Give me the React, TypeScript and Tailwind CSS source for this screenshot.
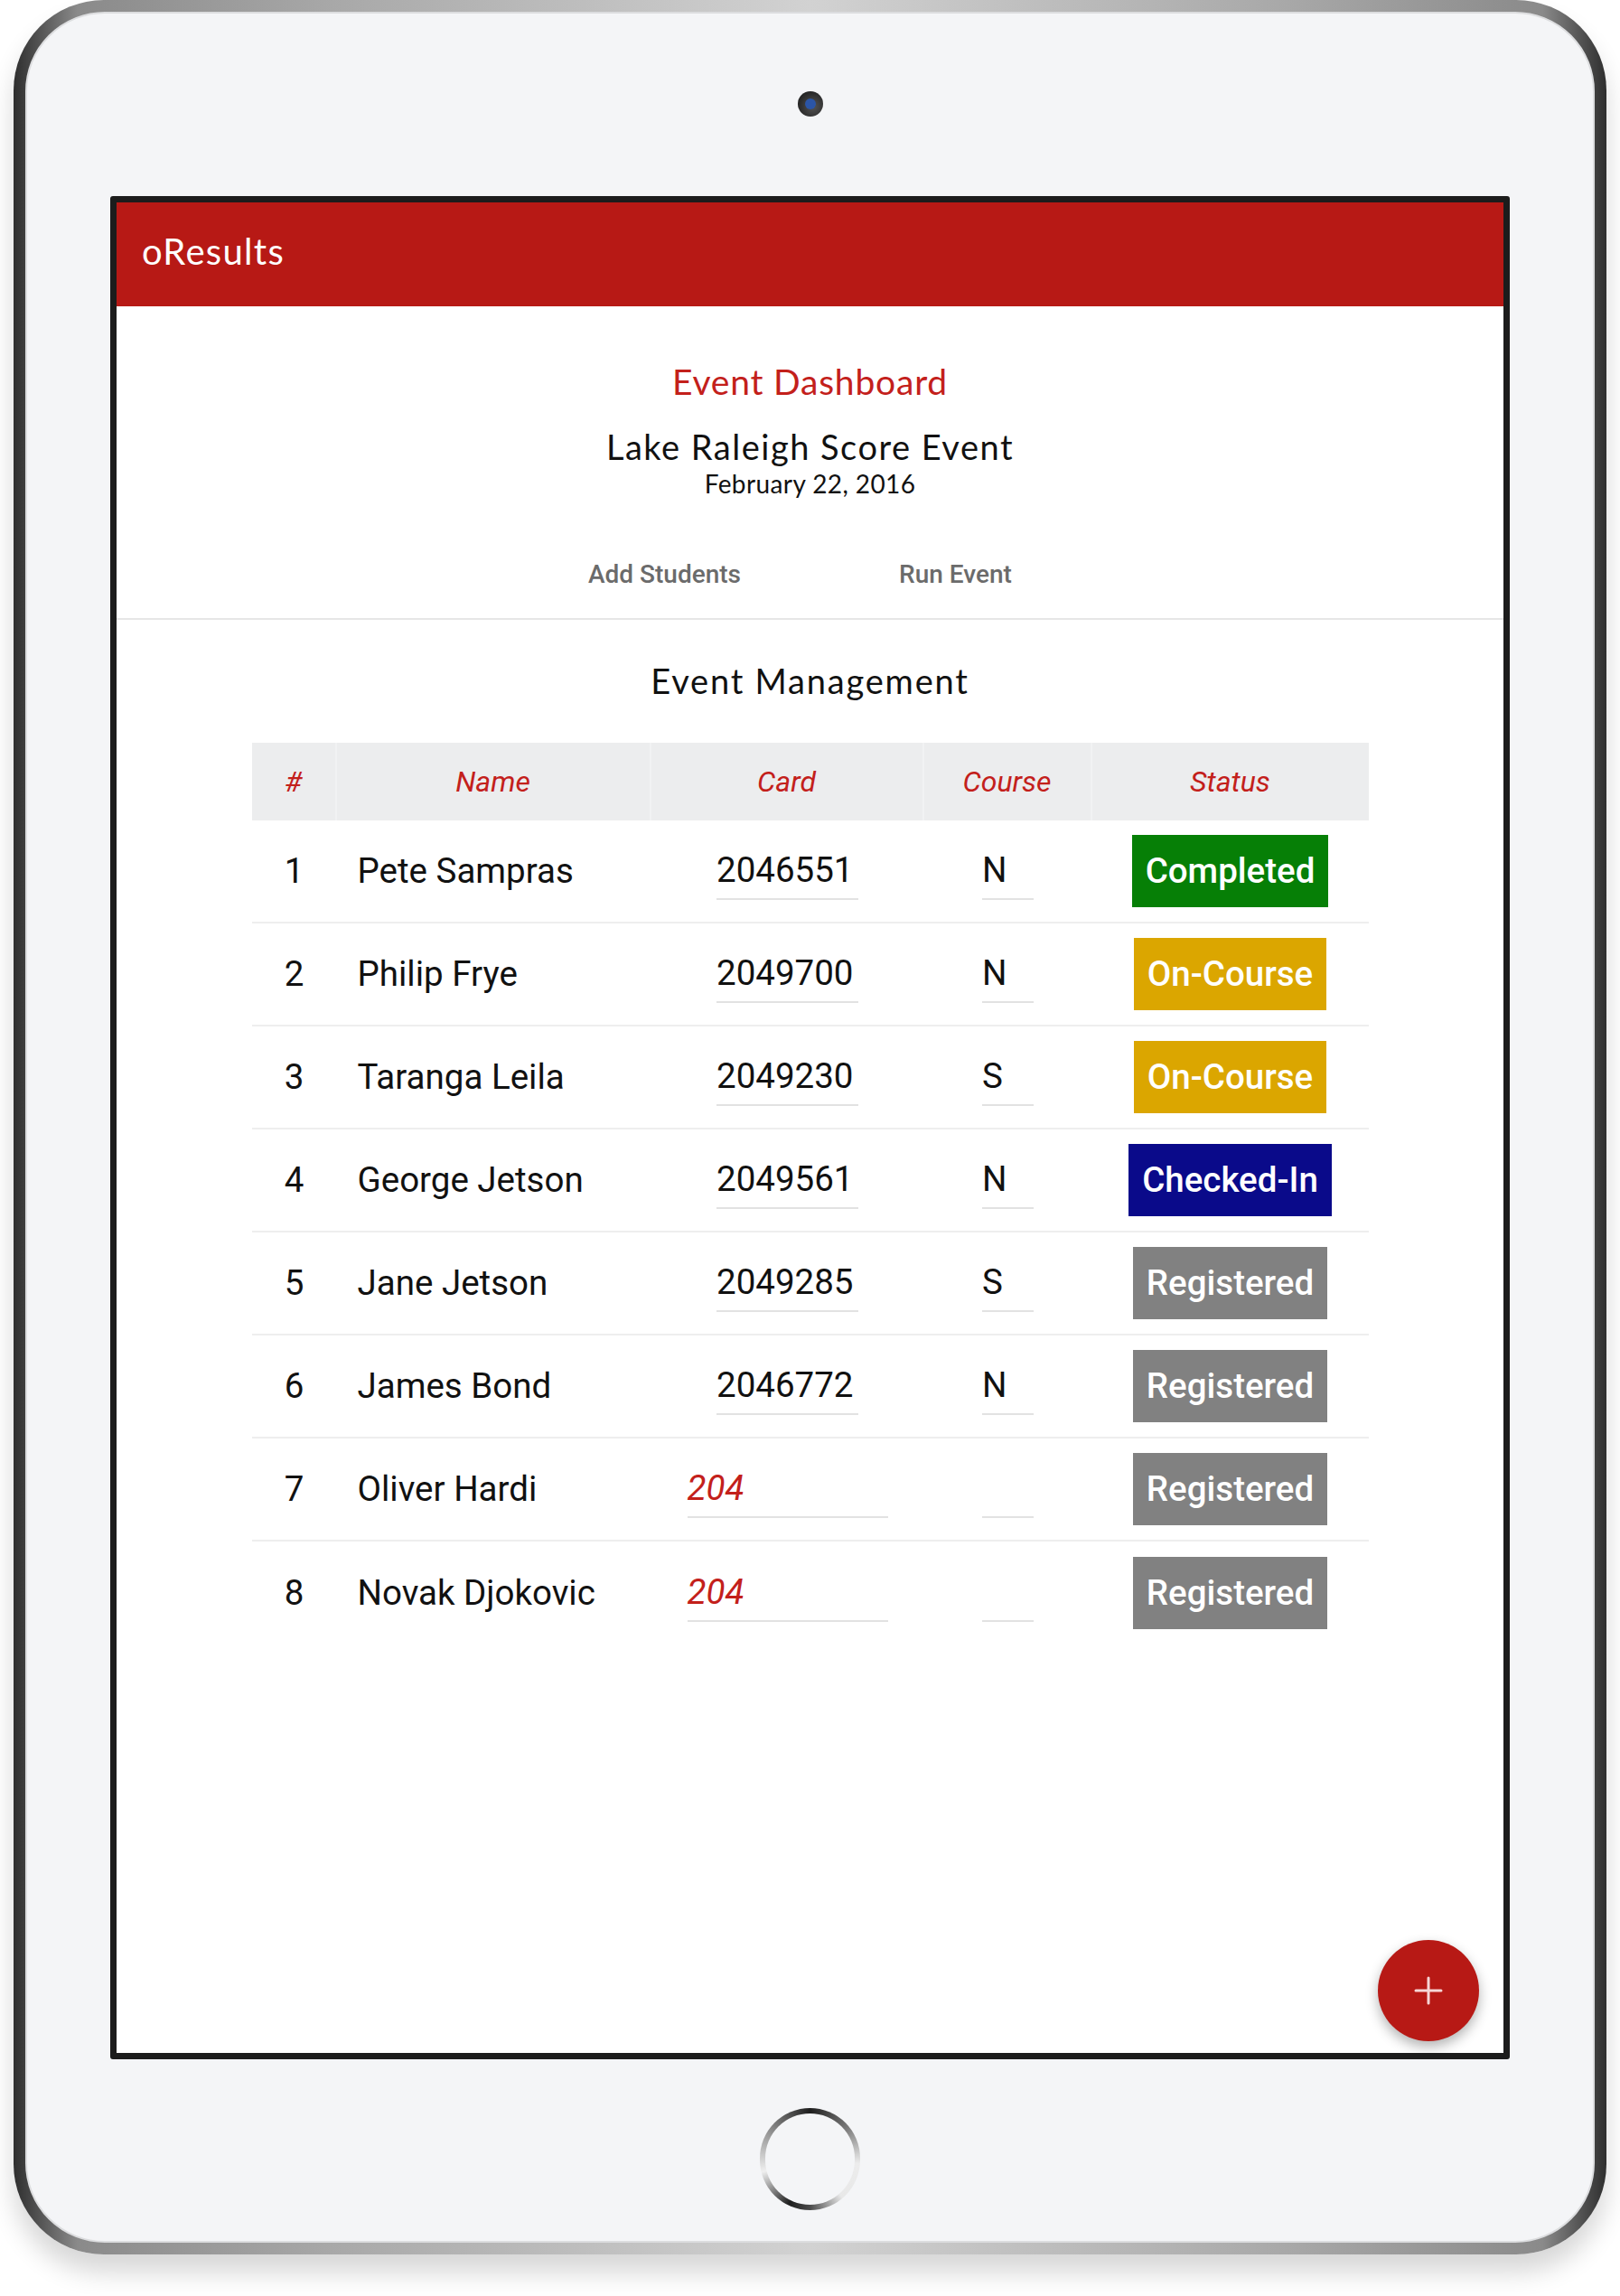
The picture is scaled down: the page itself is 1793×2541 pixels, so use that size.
import { Plus } from "lucide-react";

type Status = "Completed" | "On-Course" | "Checked-In" | "Registered";

interface Runner {
    id: number;
    name: string;
    card: string;
    course: string;
    status: Status;
}

const RUNNERS: Runner[] = [
    { id: 1, name: "Pete Sampras", card: "2046551", course: "N", status: "Completed" },
    { id: 2, name: "Philip Frye", card: "2049700", course: "N", status: "On-Course" },
    { id: 3, name: "Taranga Leila", card: "2049230", course: "S", status: "On-Course" },
    { id: 4, name: "George Jetson", card: "2049561", course: "N", status: "Checked-In" },
    { id: 5, name: "Jane Jetson", card: "2049285", course: "S", status: "Registered" },
    { id: 6, name: "James Bond", card: "2046772", course: "N", status: "Registered" },
    { id: 7, name: "Oliver Hardi", card: "204", course: "", status: "Registered" },
    { id: 8, name: "Novak Djokovic", card: "204", course: "", status: "Registered" },
];

const BADGE: Record<Status, string> = {
    Completed: "bg-[#067f06]",
    "On-Course": "bg-[#dba600]",
    "Checked-In": "bg-[#0a0a8a]",
    Registered: "bg-[#818181]",
};

const COLS = "grid grid-cols-[94px_348px_302px_186px_306px]";

function Badge({ status }: { status: Status }) {
    return (
        <span
            className={`${BADGE[status]} h-[80px] px-[15px] flex items-center text-white text-[38.5px] font-medium leading-none`}
        >
            {status}
        </span>
    );
}

function Row({ r, last }: { r: Runner; last: boolean }) {
    const partial = r.card.length < 7;
    return (
        <div
            className={`${COLS} h-[114px] text-[38.5px] text-[#111] leading-none ${
                last ? "" : "border-b-2 border-[#eeeeee]"
            }`}
        >
            <div className="flex items-center justify-center">{r.id}</div>
            <div className="flex items-center pl-[23px]">{r.name}</div>
            <div className="flex items-center justify-center">
                <div
                    className={`mb-[5px] pt-[14px] pb-[9px] leading-[44px] border-b-2 border-[#e2e2e2] ${
                        partial ? "w-[222px] text-[#c3201b] italic" : "w-[157px]"
                    }`}
                >
                    {r.card}
                </div>
            </div>
            <div className="flex items-center justify-center">
                <div className="mb-[5px] w-[57px] pt-[14px] pb-[9px] h-[69px] leading-[44px] border-b-2 border-[#e2e2e2]">
                    {r.course}
                </div>
            </div>
            <div className="flex items-center justify-center">
                <Badge status={r.status} />
            </div>
        </div>
    );
}

function Screen() {
    return (
        <div className="relative w-[1549px] h-[2062px] mt-[88px] border-[7px] border-[#1c1c1c] rounded-[3px] bg-white flex flex-col overflow-hidden">
            <div className="h-[115px] shrink-0 bg-[#b71915] flex items-center pl-[28px] pb-[8px]">
                <span className="font-['Lato',sans-serif] text-white text-[40px] leading-none tracking-[1.3px]">
                    oResults
                </span>
            </div>

            <div className="flex flex-col items-center font-['Lato',sans-serif] leading-none">
                <h1 className="mt-[64px] text-[39px] tracking-[0.8px] text-[#c3201b]">
                    Event Dashboard
                </h1>
                <h2 className="mt-[33px] text-[38px] tracking-[1.5px] text-[#111]">
                    Lake Raleigh Score Event
                </h2>
                <p className="mt-[8px] text-[28px] tracking-[0.4px] text-[#111]">
                    February 22, 2016
                </p>
            </div>

            <nav className="mt-[73px] pb-[34px] border-b-2 border-[#e6e6e6] flex justify-center font-['Roboto',sans-serif] font-medium text-[28px] leading-none text-[#6b6b6b]">
                <span className="w-[322px] text-center">Add Students</span>
                <span className="w-[322px] text-center">Run Event</span>
            </nav>

            <h3 className="mt-[48px] text-center font-['Lato',sans-serif] text-[38px] tracking-[1.8px] leading-none text-[#111]">
                Event Management
            </h3>

            <div className="mt-[50px] mx-auto w-[1236px] font-['Roboto',sans-serif]">
                <div className={`${COLS} h-[86px] bg-[#ecedee] text-[32px] italic text-[#c3201b]`}>
                    {["#", "Name", "Card", "Course", "Status"].map((h, i) => (
                        <div
                            key={h}
                            className={`flex items-center justify-center ${
                                i < 4 ? "border-r-2 border-[#f1f2f3]" : ""
                            }`}
                        >
                            {h}
                        </div>
                    ))}
                </div>
                {RUNNERS.map((r, i) => (
                    <Row key={r.id} r={r} last={i === RUNNERS.length - 1} />
                ))}
            </div>

            <button className="absolute right-[27px] bottom-[13px] w-[112px] h-[112px] rounded-full bg-[#b71915] flex items-center justify-center shadow-[0_6px_14px_rgba(0,0,0,0.3)]">
                <Plus className="w-[48px] h-[48px] text-[#f6d6d6]" strokeWidth={1.5} />
            </button>
        </div>
    );
}

export default function App() {
    return (
        <div className="w-[1793px] h-[2541px] bg-white pl-[15px]">
            <div className="w-[1763px] h-[2495px] rounded-[100px] p-[13px] bg-[linear-gradient(90deg,#2e2e2e_0%,#8a8a8a_4%,#a8a8a8_20%,#d2d2d2_50%,#a8a8a8_80%,#8a8a8a_96%,#2e2e2e_100%)] shadow-[0_20px_28px_rgba(0,0,0,0.16)]">
                <div className="h-full rounded-[88px] bg-[#f4f5f7] border-2 border-[#dcdddf] flex flex-col items-center">
                    <div className="mt-[86px] w-[28px] h-[28px] rounded-full bg-[radial-gradient(circle_at_60%_60%,#555,#121212)] flex items-center justify-center">
                        <div className="w-[12px] h-[12px] rounded-full bg-[#2b55a6]" />
                    </div>
                    <Screen />
                    <div className="mt-[54px] w-[111px] h-[113px] rounded-full bg-[conic-gradient(#1e1e1e_0deg,#7a7a7a_50deg,#ececec_95deg,#e8e8e8_140deg,#4a4a4a_180deg,#1e1e1e_205deg,#efefef_255deg,#9a9a9a_300deg,#1e1e1e_360deg)] flex items-center justify-center">
                        <div className="w-[99px] h-[101px] rounded-full bg-[#f4f5f7]" />
                    </div>
                </div>
            </div>
        </div>
    );
}
